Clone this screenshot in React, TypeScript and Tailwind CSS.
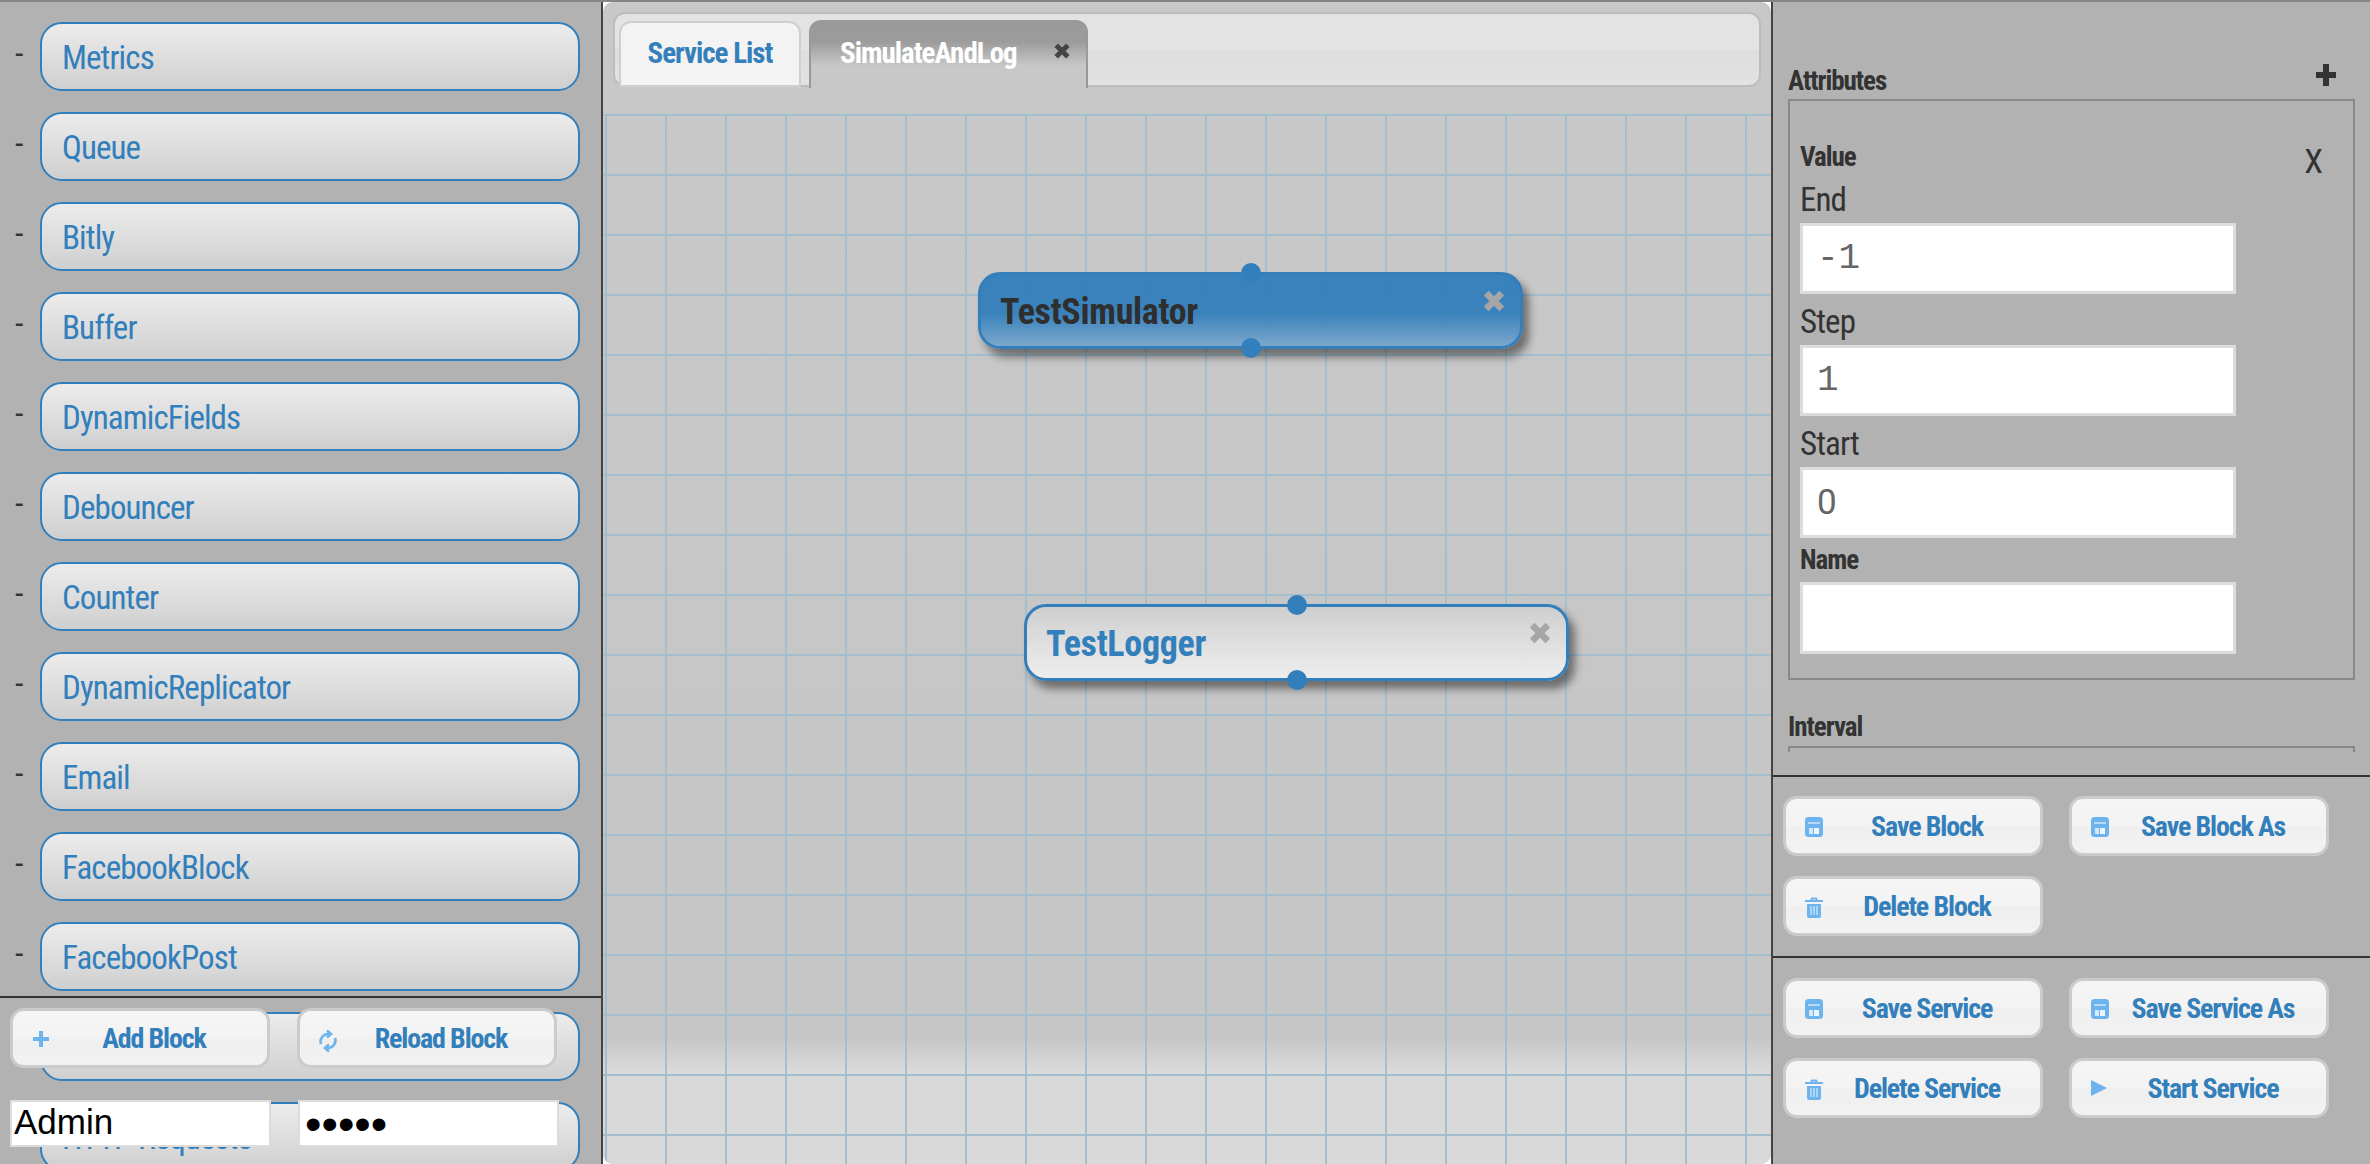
type IconName = "save" | "trash" | "plus" | "reload" | "play";

const blocks = [
  "Metrics",
  "Queue",
  "Bitly",
  "Buffer",
  "DynamicFields",
  "Debouncer",
  "Counter",
  "DynamicReplicator",
  "Email",
  "FacebookBlock",
  "FacebookPost",
  "", // this one is hidden behind the add/reload buttons
  "HTTP Requests",
];

function Icon({ name }: { name: IconName }) {
  if (name === "save") {
    return (
      <svg width="20" height="20" viewBox="0 0 20 20">
        <rect x="1" y="0" width="18" height="20" rx="3.5" fill="#6db4ee" />
        <rect x="4" y="5" width="12" height="2" fill="#b5d9f6" />
        <rect x="5" y="11" width="4" height="6" fill="#d5e9fa" />
        <rect x="10" y="11" width="5" height="6" fill="#eef6fd" />
      </svg>
    );
  }
  if (name === "trash") {
    return (
      <svg width="20" height="22" viewBox="0 0 20 22">
        <path d="M1 4h18M7 3.5 8 1.5h4l1 2" stroke="#6db4ee" strokeWidth="2" fill="none" />
        <path d="M3 7h14v12a2 2 0 0 1-2 2H5a2 2 0 0 1-2-2z" fill="#6db4ee" />
        <path d="M7 9v9M10 9v9M13 9v9" stroke="#c6e1f8" strokeWidth="1.4" />
      </svg>
    );
  }
  if (name === "plus") {
    return (
      <svg width="20" height="20" viewBox="0 0 20 20">
        <path d="M10 2v16M2 10h16" stroke="#6db4ee" strokeWidth="4" />
      </svg>
    );
  }
  if (name === "reload") {
    return (
      <svg width="20" height="24" viewBox="0 0 20 24" fill="none" stroke="#6db4ee" strokeWidth="2.6">
        <path d="M3 15A7.5 7.5 0 0 1 10 5h1" />
        <path d="M9 1.5 13 5 9 8.5" />
        <path d="M17 9a7.5 7.5 0 0 1-7 10H9" />
        <path d="M11 15.5 7 19l4 3.5" />
      </svg>
    );
  }
  return (
    <svg width="18" height="18" viewBox="0 0 18 18">
      <path d="M1 1l16 8-16 8z" fill="#6db4ee" />
    </svg>
  );
}

function CloseX({ color, size }: { color: string; size: number }) {
  return (
    <svg width={size} height={size} viewBox="0 0 20 20">
      <path d="M3.5 3.5l13 13M16.5 3.5l-13 13" stroke={color} strokeWidth="5.5" />
    </svg>
  );
}

function ActionButton({ label, icon }: { label: string; icon: IconName }) {
  return (
    <button className="relative w-[260px] h-[60px] pl-[28px] pt-[2px] rounded-[14px] border-[3px] border-[#cbcbcb] bg-[linear-gradient(#f5f5f5,#f3f3f3_50%,#efefef_52%,#f2f2f2)] text-[28px] font-bold text-[#337fbb] leading-none tracking-[-1.15px]">
      <span className="absolute left-[18px] top-[18px] blur-[0.5px]">
        <Icon name={icon} />
      </span>
      {label}
    </button>
  );
}

function Field({ label, value }: { label: string; value: string }) {
  return (
    <div>
      <div className="h-[51px] pt-[4px] flex items-center text-[33px] text-[#333] tracking-[-0.9px]">{label}</div>
      <input
        readOnly
        value={value}
        className={`block w-[436px] h-[71px] px-[14px] bg-white border-[3px] border-[#dcdcdc] text-[#666] outline-none ${
          value === "0"
            ? "text-[35px] font-['Roboto',sans-serif] [font-stretch:100%]"
            : "text-[36px] font-['Liberation_Mono',monospace]"
        }`}
      />
    </div>
  );
}

function Node({
  name,
  selected,
  className,
}: {
  name: string;
  selected?: boolean;
  className: string;
}) {
  return (
    <div
      className={`absolute w-[545px] h-[77px] rounded-[22px] border-[3px] border-[#337fbb] shadow-[6px_8px_9px_rgba(0,0,0,0.45)] flex items-center pl-[19px] pt-[2px] ${
        selected
          ? "bg-[linear-gradient(rgba(51,127,187,0.96),rgba(53,128,188,0.96)_55%,rgba(120,166,204,0.96))] text-[#2f2f2f]"
          : "bg-[linear-gradient(#cfcfcf,#eeeeee)] text-[#337fbb]"
      } ${className}`}
    >
      <span className="text-[36px] font-bold tracking-[-0.3px] leading-none">{name}</span>
      <span className="absolute right-[14px] top-[14px]">
        <CloseX color="#a6a6a6" size={24} />
      </span>
      <span className="absolute left-[260px] -top-[12px] w-[20px] h-[20px] rounded-full bg-[#337fbb]" />
      <span className="absolute left-[260px] -bottom-[12px] w-[20px] h-[20px] rounded-full bg-[#337fbb]" />
    </div>
  );
}

export default function App() {
  return (
    <div className="relative flex w-[2370px] h-[1164px] overflow-hidden bg-white font-['Roboto',sans-serif] [font-stretch:75%]">
      <div className="absolute inset-x-0 top-0 h-[2px] bg-[#858585] z-10" />

      {/* left block list */}
      <div className="relative w-[603px] shrink-0 h-full overflow-hidden bg-[#b2b2b2] border-r-[2px] border-[#444] pt-[22px]">
        {blocks.map((b, i) => (
          <div key={i} className="flex items-center h-[69px] mb-[21px]">
            <div className="w-[40px] pl-[15px] -mt-[8px] text-[34px] text-[#333] leading-none">-</div>
            <div className="w-[540px] h-[69px] flex items-center pl-[20px] pt-[2px] rounded-[22px] border-2 border-[#337fbb] bg-[linear-gradient(#ececec,#cfcfcf)] text-[33px] text-[#337fbb] tracking-[-0.9px] leading-none">
              {b}
            </div>
          </div>
        ))}

        {/* login and add block sit on top of the list */}
        <div className="absolute left-0 right-0 top-[996px] border-t-2 border-[#333] pl-[10px] pt-[10px]">
          <div className="flex gap-[27px]">
            <ActionButton label="Add Block" icon="plus" />
            <ActionButton label="Reload Block" icon="reload" />
          </div>
          <div className="flex gap-[27px] mt-[32px]">
            <input
              readOnly
              value="Admin"
              className="w-[261px] h-[47px] px-[2px] pb-[2px] bg-white border-2 border-[#dcdcdc] text-[35px] text-black font-['Liberation_Sans',sans-serif] [font-stretch:100%] outline-none"
            />
            <input
              readOnly
              type="password"
              value="Admin"
              className="w-[261px] h-[47px] px-[5px] bg-white border-2 border-[#dcdcdc] text-[47px] leading-none text-black font-['Liberation_Sans',sans-serif] [font-stretch:100%] outline-none"
            />
          </div>
        </div>
      </div>

      {/* service canvas */}
      <div className="relative w-[1168px] shrink-0 h-full pt-[2px] overflow-hidden">
        <div className="relative h-full flex flex-col rounded-[10px] overflow-hidden bg-[#c8c8c8] pt-[10px]">
          <div className="mx-[10px] h-[75px] shrink-0 flex items-end gap-[8px] pl-[4px] rounded-[12px] border-2 border-[#bdbdbd] bg-[linear-gradient(#e3e3e3,#e3e3e3_50%,#dedede_52%,#e2e2e2)]">
            <div className="w-[182px] h-[66px] -mb-[2px] flex items-center justify-center rounded-t-[12px] border-2 border-[#cfcfcf] bg-[#f3f3f3] text-[29px] font-bold text-[#337fbb] tracking-[-1px]">
              Service List
            </div>
            <div className="relative w-[279px] h-[68px] -mb-[3px] flex items-center pl-[29px] rounded-t-[12px] border-x-2 border-[#999] bg-[linear-gradient(#999999,#9c9c9c_32%,#c8c8c8_68%)] text-[29px] font-bold text-white tracking-[-1px]">
              SimulateAndLog
              <span className="absolute right-[15px] top-[22px]">
                <CloseX color="#444" size={18} />
              </span>
            </div>
          </div>

          <div className="flex-1 mt-[27px] bg-[linear-gradient(#a3bfce_2px,transparent_2px),linear-gradient(90deg,#a3bfce_2px,transparent_2px),linear-gradient(#c8c8c8,#c6c6c6_88%,#d9d9d9_91%)] bg-[size:60px_60px,60px_60px,100%_100%] bg-[position:2px_0,2px_0,0_0]" />

          <Node name="TestSimulator" selected className="left-[375px] top-[270px]" />
          <Node name="TestLogger" className="left-[421px] top-[602px]" />
        </div>
      </div>

      {/* right properties */}
      <div className="flex-1 h-full flex flex-col bg-[#b2b2b2] border-l-[2px] border-[#444]">
        <div className="h-[777px] shrink-0 border-b-2 border-[#333]">
          <div className="h-[752px] overflow-hidden px-[15px] pt-[62px]">
            <div className="h-[36px] pt-[2px] flex items-center justify-between pr-[19px] text-[27px] font-bold text-[#333] tracking-[-1px]">
              Attributes
              <svg width="20" height="22" viewBox="0 0 20 22" className="-mt-[12px]">
                <path d="M10 0v22M0 11h20" stroke="#333" strokeWidth="6" />
              </svg>
            </div>
            <div className="mt-[1px] border-2 border-[#888] pl-[10px] pr-[31px] pt-[42px] pb-[24px]">
              <div className="h-[29px] flex items-center justify-between text-[27px] font-bold text-[#333] tracking-[-1px] leading-none">
                Value
                <span className="text-[34px] font-normal mt-[6px]">X</span>
              </div>
              <Field label="End" value="-1" />
              <Field label="Step" value="1" />
              <Field label="Start" value="0" />
              <div className="h-[44px] flex items-center text-[27px] font-bold text-[#333] tracking-[-1px]">Name</div>
              <input readOnly value="" className="block w-[436px] h-[72px] bg-white border-[3px] border-[#dcdcdc] outline-none" />
            </div>
            <div className="h-[66px] pt-[28px] flex items-center text-[27px] font-bold text-[#333] tracking-[-1px]">Interval</div>
            <div className="h-[200px] border-2 border-[#888]" />
          </div>
        </div>

        <div className="h-[181px] shrink-0 border-b-2 border-[#333] pl-[10px] pt-[19px]">
          <div className="grid grid-cols-[260px_260px] gap-x-[26px] gap-y-[20px]">
            <ActionButton label="Save Block" icon="save" />
            <ActionButton label="Save Block As" icon="save" />
            <ActionButton label="Delete Block" icon="trash" />
          </div>
        </div>

        <div className="pl-[10px] pt-[20px]">
          <div className="grid grid-cols-[260px_260px] gap-x-[26px] gap-y-[20px]">
            <ActionButton label="Save Service" icon="save" />
            <ActionButton label="Save Service As" icon="save" />
            <ActionButton label="Delete Service" icon="trash" />
            <ActionButton label="Start Service" icon="play" />
          </div>
        </div>
      </div>
    </div>
  );
}
